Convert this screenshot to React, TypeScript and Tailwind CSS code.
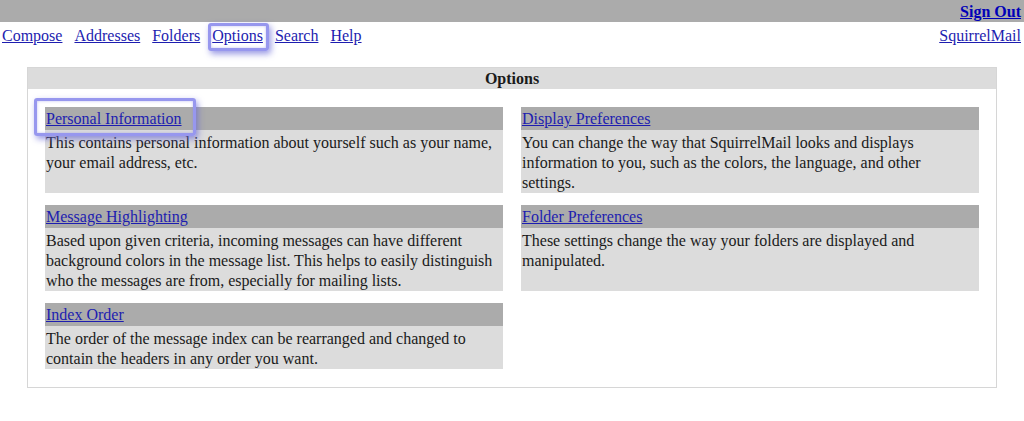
import React from "react";

const navLinks = ["Compose", "Addresses", "Folders", "Options", "Search", "Help"];

const options = [
  {
    title: "Personal Information",
    text: "This contains personal information about yourself such as your name, your email address, etc.",
    marked: true,
  },
  {
    title: "Display Preferences",
    text: "You can change the way that SquirrelMail looks and displays information to you, such as the colors, the language, and other settings.",
  },
  {
    title: "Message Highlighting",
    text: "Based upon given criteria, incoming messages can have different background colors in the message list. This helps to easily distinguish who the messages are from, especially for mailing lists.",
  },
  {
    title: "Folder Preferences",
    text: "These settings change the way your folders are displayed and manipulated.",
  },
  {
    title: "Index Order",
    text: "The order of the message index can be rearranged and changed to contain the headers in any order you want.",
  },
];

function Marker({ className }: { className: string }) {
  // purple annotation box drawn over the screenshot
  return (
    <span
      className={`pointer-events-none absolute rounded-[3px] border-[3px] border-[#9797ee] shadow-[2px_3px_6px_rgba(100,100,215,0.65),inset_0_0_3px_rgba(130,130,230,0.5)] ${className}`}
    />
  );
}

export default function App() {
  return (
    <div className="min-h-[421px] bg-white text-[16px] leading-[20px] text-[#1a1a1a] font-['Liberation_Serif','Times_New_Roman',serif]">
      {/* top bar */}
      <div className="flex h-[22px] items-center justify-end bg-[#ababab] pr-[3px] pt-[1px]">
        <a href="#" className="font-bold text-[#0000b8] underline">
          Sign Out
        </a>
      </div>

      {/* nav */}
      <div className="flex items-center justify-between pl-[2px] pr-[3px] pt-[4px]">
        <div className="flex gap-3">
          {navLinks.map((l) => (
            <span key={l} className="relative inline-block">
              <a href="#" className="text-[#1d1db0] underline">
                {l}
              </a>
              {l === "Options" && <Marker className="-left-[4px] -right-[6px] -top-[3px] -bottom-[5px]" />}
            </span>
          ))}
        </div>
        <a href="#" className="text-[#1d1db0] underline">
          SquirrelMail
        </a>
      </div>

      {/* options box */}
      <div className="mx-auto mt-[21px] w-[970px] border border-[#d6d6d6]">
        <div className="h-[21px] bg-[#dcdcdc] pt-[1px] text-center font-bold">Options</div>
        <div className="grid grid-cols-2 gap-x-[18px] gap-y-[12px] px-[17px] pb-[18px] pt-[18px]">
          {options.map((o) => (
            <div key={o.title} className="flex flex-col">
              <div className="h-[23px] bg-[#ababab] pl-[1px] pt-[2px]">
                <span className="relative inline-block">
                  <a href="#" className="text-[#1d1db0] underline">
                    {o.title}
                  </a>
                  {o.marked && <Marker className="-left-[12px] -right-[14px] -top-[11px] -bottom-[7px]" />}
                </span>
              </div>
              <div className="flex-1 bg-[#dcdcdc] pl-[1px] pr-2 pt-[3px]">{o.text}</div>
            </div>
          ))}
        </div>
      </div>
    </div>
  );
}
